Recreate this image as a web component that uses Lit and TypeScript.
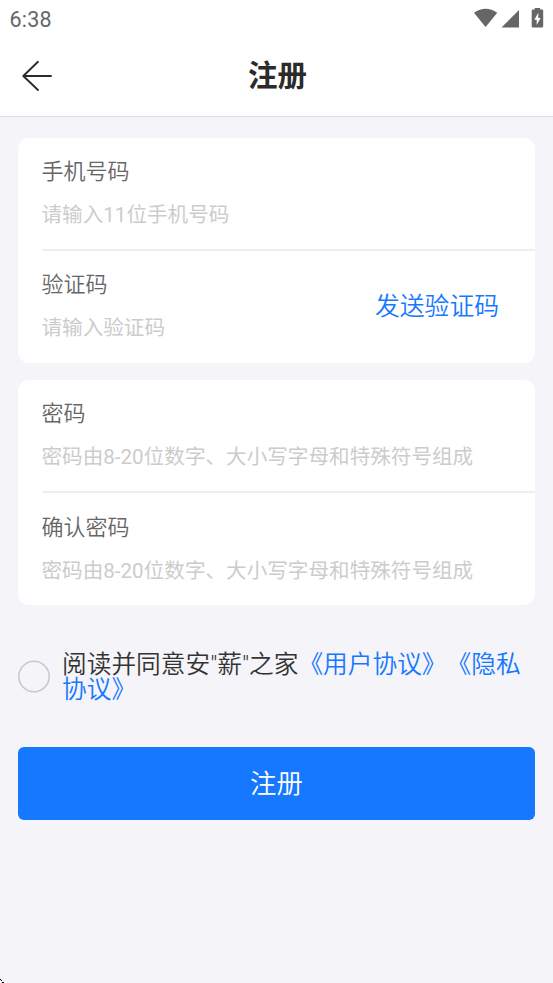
import { LitElement, html, css, nothing } from "lit";
import { customElement, property } from "lit/decorators.js";

@customElement("form-field")
class FormField extends LitElement {
  @property() label = "";
  @property() hint = "";
  @property() action = "";

  static styles = css`
    :host {
      display: flex;
      align-items: center;
      justify-content: space-between;
      height: 111.25px;
      margin-left: 23.5px;
      padding-right: 36px;
      box-sizing: border-box;
    }
    .texts {
      display: flex;
      flex-direction: column;
      gap: 13px;
    }
    .label {
      font-size: 22px;
      line-height: 30px;
      color: #666;
    }
    .hint {
      font-size: 20.6px;
      font-weight: 400;
      line-height: 30px;
      color: #ccc;
      white-space: nowrap;
    }
    .action {
      font-size: 24.8px;
      line-height: 34px;
      color: #1677ff;
    }
  `;

  render() {
    return html`
      <div class="texts">
        <span class="label">${this.label}</span>
        <span class="hint">${this.hint}</span>
      </div>
      ${this.action ? html`<span class="action">${this.action}</span>` : nothing}
    `;
  }
}

@customElement("app-root")
class AppRoot extends LitElement {
  static styles = css`
    :host {
      display: flex;
      flex-direction: column;
      position: relative;
      height: 983px;
      overflow: hidden;
      background: #f4f4f9;
      font-family: Roboto, "Noto Sans CJK SC", sans-serif;
      font-weight: 350;
      text-spacing-trim: space-all;
    }
    svg {
      display: block;
    }
    .top {
      background: #fff;
      height: 116px;
      border-bottom: 1px solid #dcdcde;
      flex: none;
    }
    .status {
      display: flex;
      justify-content: space-between;
      align-items: center;
      height: 38px;
      padding-left: 9.5px;
    }
    .time {
      font-size: 21.5px;
      font-weight: 450;
      color: #666;
      line-height: 38px;
      padding-top: 2px;
      letter-spacing: 0.2px;
    }
    .nav {
      display: grid;
      grid-template-columns: 75px 1fr 75px;
      align-items: center;
      height: 76px;
    }
    .title {
      margin: 0;
      padding: 0 0 0 2px;
      text-align: center;
      font-size: 29.5px;
      line-height: 40px;
      font-weight: 700;
      color: #2b2b2b;
    }
    .body {
      padding: 21px 18px 0;
    }
    .card {
      background: #fff;
      border-radius: 11px;
      height: 224.75px;
      margin-bottom: 17px;
    }
    .divider {
      height: 2px;
      margin-left: 23.5px;
      background: #eee;
    }
    .card + .card .divider {
      margin-bottom: 0.5px;
    }
    .agree {
      display: flex;
      align-items: center;
      gap: 12px;
      height: 50px;
      margin-top: 46.5px;
    }
    .radio {
      flex: none;
    }
    .terms {
      margin: 0;
      padding-top: 3px;
      font-size: 24.7px;
      line-height: 24.7px;
      color: #333;
    }
    .link {
      color: #1677ff;
    }
    .submit {
      display: block;
      width: 100%;
      height: 73px;
      margin-top: 46px;
      padding: 1px 0 0;
      border: 0;
      border-radius: 6px;
      background: #1677ff;
      color: #fff;
      font: 350 26.4px/72px Roboto, "Noto Sans CJK SC", sans-serif;
    }
    .corner {
      position: absolute;
      left: 0;
      bottom: 0;
    }
  `;

  render() {
    return html`
      <header class="top">
        <div class="status">
          <span class="time">6:38</span>
          <svg width="80" height="38" viewBox="0 0 80 38" fill="#666">
            <path d="M12.6 27 L1 12.7 Q12.6 5 24.2 12.7 Z" />
            <path d="M46 10 V27.5 H28.5 Z" />
            <path
              fill-rule="evenodd"
              d="M61.5 9.5 H59.8 Q58.7 9.5 58.7 10.6 V26.3 Q58.7 27.5 59.8 27.5 H69 Q70.2 27.5 70.2 26.3 V10.6 Q70.2 9.5 69 9.5 H67.2 V8 H61.7 V9.5 Z M65.3 12.7 L61.3 19.7 H63.7 V25 L67.6 18 H65.3 Z"
            />
          </svg>
        </div>
        <nav class="nav">
          <svg width="75" height="76" viewBox="0 0 75 76" fill="none" stroke="#2b2b2b" stroke-width="1.9" stroke-linecap="round" stroke-linejoin="round">
            <path d="M38 23.8 L23.3 38 L38 52 M23.3 38 H51" />
          </svg>
          <h1 class="title">注册</h1>
        </nav>
      </header>
      <main class="body">
        <section class="card">
          <form-field label="手机号码" hint="请输入11位手机号码"></form-field>
          <div class="divider"></div>
          <form-field label="验证码" hint="请输入验证码" action="发送验证码"></form-field>
        </section>
        <section class="card">
          <form-field label="密码" hint="密码由8-20位数字、大小写字母和特殊符号组成"></form-field>
          <div class="divider"></div>
          <form-field label="确认密码" hint="密码由8-20位数字、大小写字母和特殊符号组成"></form-field>
        </section>
        <div class="agree">
          <svg class="radio" width="32" height="33" viewBox="0 0 32 33" fill="none" stroke="#c8c8c8" stroke-width="1.5">
            <circle cx="16" cy="16.5" r="15.2" />
          </svg>
          <p class="terms">阅读并同意安"薪"之家<span class="link">《用户协议》</span><span class="link">《隐私协议》</span></p>
        </div>
        <button class="submit">注册</button>
      </main>
      <svg class="corner" width="4" height="4" viewBox="0 0 4 4" shape-rendering="crispEdges">
        <path d="M0 0h1v1h1v1h-1v-1h-1z M2 3h2v1h-2z" />
      </svg>
    `;
  }
}
